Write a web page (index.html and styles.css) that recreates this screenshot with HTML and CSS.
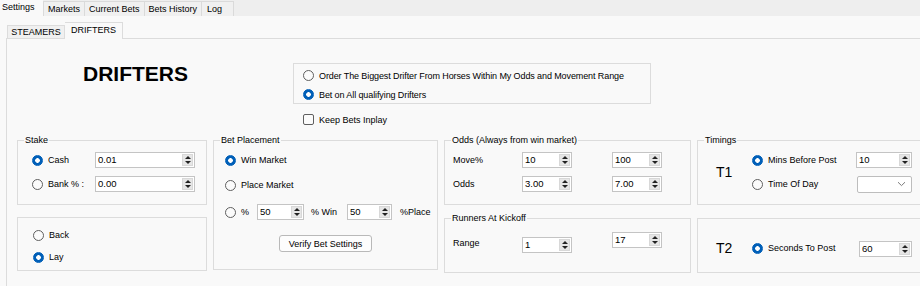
FILE: index.html
```html
<!DOCTYPE html>
<html lang="en">
<head>
<meta charset="utf-8">
<title>Drifters Settings</title>
<link rel="stylesheet" href="styles.css">
</head>
<body>
<div class="app">
  <div class="tabs">
    <div class="tab active">Settings</div>
    <div class="tab">Markets</div>
    <div class="tab">Current Bets</div>
    <div class="tab">Bets History</div>
    <div class="tab tab-log">Log</div>
  </div>
  <div class="tabbody">
    <div class="subtabs">
      <div class="subtab">STEAMERS</div>
      <div class="subtab active">DRIFTERS</div>
    </div>
    <div class="page">
      <div class="header">
        <h1 class="title">DRIFTERS</h1>
        <div class="options">
          <div class="optbox">
            <div class="opt"><span class="radio"></span><span>Order The Biggest Drifter From Horses Within My Odds and Movement Range</span></div>
            <div class="opt"><span class="radio on"></span><span>Bet on All qualifying Drifters</span></div>
          </div>
          <div class="opt chk"><span class="check"></span><span>Keep Bets Inplay</span></div>
        </div>
      </div>

      <div class="panels">
        <fieldset class="group stake">
          <legend>Stake</legend>
          <div class="row">
            <span class="radio on"></span><span class="lbl w47">Cash</span>
            <div class="num w100"><span class="val">0.01</span><span class="spin"></span></div>
          </div>
          <div class="row">
            <span class="radio"></span><span class="lbl w47">Bank % :</span>
            <div class="num w100"><span class="val">0.00</span><span class="spin"></span></div>
          </div>
        </fieldset>

        <fieldset class="group backlay">
          <div class="row"><span class="radio"></span><span class="lbl">Back</span></div>
          <div class="row gap2"><span class="radio on"></span><span class="lbl">Lay</span></div>
        </fieldset>

        <fieldset class="group placement">
          <legend>Bet Placement</legend>
          <div class="row"><span class="radio on"></span><span class="lbl">Win Market</span></div>
          <div class="row gap5"><span class="radio"></span><span class="lbl">Place Market</span></div>
          <div class="row gap7">
            <span class="radio"></span><span class="lbl w16">%</span>
            <div class="num w47"><span class="val">50</span><span class="spin"></span></div>
            <span class="lbl pct-win">% Win</span>
            <div class="num w45"><span class="val">50</span><span class="spin"></span></div>
            <span class="lbl pct-place">%Place</span>
          </div>
          <button class="btn" type="button">Verify Bet Settings</button>
        </fieldset>

        <fieldset class="group odds">
          <legend>Odds (Always from win market)</legend>
          <div class="row">
            <span class="lbl w69">Move%</span>
            <div class="num w50"><span class="val">10</span><span class="spin"></span></div>
            <div class="num w50 second up1"><span class="val">100</span><span class="spin"></span></div>
          </div>
          <div class="row">
            <span class="lbl w69">Odds</span>
            <div class="num w50"><span class="val">3.00</span><span class="spin"></span></div>
            <div class="num w50 second"><span class="val">7.00</span><span class="spin"></span></div>
          </div>
        </fieldset>

        <fieldset class="group runners">
          <legend>Runners At Kickoff</legend>
          <div class="row top">
            <span class="lbl w69 lh20">Range</span>
            <div class="num w50 down4"><span class="val">1</span><span class="spin"></span></div>
            <div class="num w50 second"><span class="val">17</span><span class="spin"></span></div>
          </div>
        </fieldset>

        <fieldset class="group timings">
          <legend>Timings</legend>
          <div class="tline">
            <span class="tname">T1</span>
            <div class="tcol">
              <div class="row">
                <span class="radio on"></span><span class="lbl w88">Mins Before Post</span>
                <div class="num w56"><span class="val">10</span><span class="spin"></span></div>
              </div>
              <div class="row">
                <span class="radio"></span><span class="lbl w88">Time Of Day</span>
                <div class="combo"><svg width="9" height="6" viewBox="0 0 9 6"><path d="M1 1.2 L4.5 4.6 L8 1.2" fill="none" stroke="#7a7a7a" stroke-width="1"/></svg></div>
              </div>
            </div>
          </div>
        </fieldset>

        <fieldset class="group t2">
          <div class="tline">
            <span class="tname">T2</span>
            <div class="row">
              <span class="radio on"></span><span class="lbl w91">Seconds To Post</span>
              <div class="num w53 down1"><span class="val">60</span><span class="spin"></span></div>
            </div>
          </div>
        </fieldset>
      </div>
    </div>
  </div>
</div>
</body>
</html>
```

FILE: styles.css
```css
* { box-sizing: border-box; }

html, body {
  margin: 0;
  padding: 0;
}

body {
  width: 920px;
  height: 286px;
  overflow: hidden;
  background: #f9f9f9;
  color: #000;
  font-family: "Liberation Sans", Arial, sans-serif;
  font-size: 9px;
}

.app {
  width: 920px;
  height: 286px;
  overflow: hidden;
}

/* top tab strip */
.tabs {
  display: flex;
  height: 16px;
  background: #eeeeee;
}

.tab {
  margin-top: 1px;
  height: 15px;
  line-height: 14px;
  padding: 0 4px;
  border: 1px solid #dadada;
  border-bottom: 0;
  margin-right: -1px;
  background: #f0f0f0;
  white-space: nowrap;
}

.tab.active {
  margin-top: 0;
  height: 16px;
  line-height: 15px;
  width: 43px;
  padding: 0 0 0 2px;
  border: 0;
  background: #f9f9f9;
  margin-right: 0;
}

.tab-log {
  width: 33px;
  padding-left: 5px;
}

/* inner tab strip */
.tabbody {
  background: #f9f9f9;
}

.subtabs {
  display: flex;
  align-items: flex-end;
  height: 22px;
  padding-left: 7px;
}

.subtab {
  width: 58px;
  height: 13px;
  line-height: 12px;
  text-align: center;
  border: 1px solid #dcdcdc;
  border-bottom: 0;
  background: #f0f0f0;
}

.subtab.active {
  position: relative;
  height: 17px;
  margin-bottom: -1px;
  line-height: 14px;
  background: #f9f9f9;
  border-left: 0;
}

.page {
  margin-left: 6px;
  height: 248px;
  border-top: 1px solid #dcdcdc;
  border-left: 1px solid #dcdcdc;
}

/* header */
.header {
  display: flex;
  padding: 24px 0 0 76px;
}

.title {
  margin: 0;
  width: 210px;
  font-size: 21px;
  line-height: 21px;
  font-weight: bold;
}

.options {
  width: 358px;
}

.optbox {
  height: 41px;
  border: 1px solid #dcdcdc;
  padding: 2px 0 0 9px;
}

.opt {
  display: flex;
  align-items: center;
  gap: 5px;
  height: 19px;
  white-space: nowrap;
}

.optbox .opt {
  letter-spacing: -0.1px;
}

.opt.chk {
  margin-top: 6px;
  padding-left: 10px;
}

/* controls */
.radio {
  flex: none;
  width: 11px;
  height: 11px;
  border-radius: 50%;
  border: 1px solid #5f5f5f;
  background: #fbfbfb;
}

.radio.on {
  border-color: #005fb8;
  background: radial-gradient(circle, #ffffff 0 2px, #005fb8 2.6px);
}

.check {
  flex: none;
  width: 11px;
  height: 11px;
  border: 1px solid #5f5f5f;
  border-radius: 2px;
  background: #fbfbfb;
}

.num {
  flex: none;
  display: flex;
  height: 16px;
  border: 1px solid #c4c4c4;
  background: #fff;
}

.num .val {
  flex: 1;
  padding-left: 2px;
  line-height: 14px;
  font-size: 9.5px;
}

.spin {
  flex: none;
  width: 11px;
  margin: 1px;
  background: #e6e6e6;
  border: 1px solid #d8d8d8;
  display: flex;
  flex-direction: column;
  align-items: center;
  justify-content: center;
  gap: 2px;
}

.spin::before {
  content: "";
  border-left: 3px solid transparent;
  border-right: 3px solid transparent;
  border-bottom: 3px solid #222;
}

.spin::after {
  content: "";
  border-left: 3px solid transparent;
  border-right: 3px solid transparent;
  border-top: 3px solid #222;
}

.combo {
  flex: none;
  width: 55px;
  height: 17px;
  margin-left: 1px;
  border: 1px solid #bdbdbd;
  border-radius: 2px;
  background: #fff;
  display: flex;
  align-items: center;
  justify-content: flex-end;
  padding-right: 5px;
}

.btn {
  display: block;
  width: 93px;
  height: 17px;
  margin: 13px 0 0 54px;
  padding: 0;
  border: 1px solid #b9b9b9;
  border-radius: 3px;
  background: #fdfdfd;
  font-family: inherit;
  font-size: 9px;
  color: #000;
}

/* widths */
.w16 { width: 16px; }
.w45 { width: 45px; }
.w47 { width: 47px; }
.w50 { width: 50px; }
.w53 { width: 53px; }
.w56 { width: 56px; }
.w69 { width: 69px; }
.w88 { width: 88px; }
.w91 { width: 91px; }
.w100 { width: 100px; }

/* panels */
.panels {
  display: grid;
  grid-template-columns: 190px 225px 247px 260px;
  grid-template-rows: 71px 61px;
  column-gap: 6px;
  row-gap: 7px;
  margin: 5px 0 0 10px;
}

.group {
  --pl: 0px;
  margin: 0;
  padding: 0 0 0 var(--pl);
  min-width: 0;
  border: 1px solid #dcdcdc;
  align-self: start;
}

.group legend {
  margin-left: calc(6px - var(--pl));
  padding: 0 1px;
  line-height: 12px;
  font-size: 9px;
}

.row {
  display: flex;
  align-items: center;
  height: 20px;
  white-space: nowrap;
}

.row + .row { margin-top: 4px; }
.row.gap2 { margin-top: 2px; }
.row.gap5 { margin-top: 5px; }
.row.gap7 { margin-top: 7px; }
.row.top { align-items: flex-start; height: 21px; }

.lbl { flex: none; }
.lh20 { line-height: 20px; }
.radio + .lbl { margin-left: 5px; }

.stake {
  --pl: 14px;
  grid-column: 1;
  grid-row: 1;
  height: 71px;
  padding-top: 4px;
}

.backlay {
  --pl: 15px;
  grid-column: 1;
  grid-row: 2;
  height: 54px;
  margin-top: 5px;
  padding-top: 7px;
}

.placement {
  --pl: 11px;
  grid-column: 2;
  grid-row: 1 / span 2;
  height: 136px;
  padding-top: 4px;
}

.pct-win { width: 36px; margin-left: 7px; }
.pct-place { margin-left: 8px; }

.odds {
  --pl: 8px;
  grid-column: 3;
  grid-row: 1;
  height: 71px;
  padding-top: 4px;
}

.num.second { margin-left: 40px; }
.up1 { margin-top: -1px; }
.down4 { margin-top: 4px; }
.down1 { margin-top: 2px; }

.runners {
  --pl: 8px;
  grid-column: 3;
  grid-row: 2;
  height: 61px;
  padding-top: 9px;
}

.runners .num.second { margin-top: -1px; }

.timings {
  --pl: 18px;
  grid-column: 4;
  grid-row: 1;
  height: 71px;
  padding-top: 4px;
}

.tline {
  display: flex;
  align-items: center;
}

.tname {
  flex: none;
  width: 36px;
  font-size: 14px;
}

.t2 {
  --pl: 18px;
  grid-column: 4;
  grid-row: 2;
  height: 55px;
  margin-top: 6px;
  padding-top: 19px;
}
```
